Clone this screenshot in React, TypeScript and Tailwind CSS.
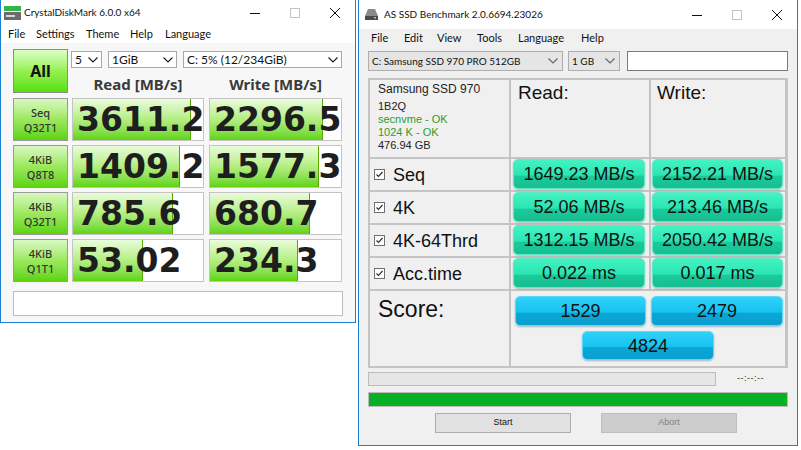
import React from 'react';

const cdmRows = [
  { a: 'Seq', b: 'Q32T1', r: '3611.2', w: '2296.5', rp: 91, wp: 86 },
  { a: '4KiB', b: 'Q8T8', r: '1409.2', w: '1577.3', rp: 82, wp: 83 },
  { a: '4KiB', b: 'Q32T1', r: '785.6', w: '680.7', rp: 77, wp: 76 },
  { a: '4KiB', b: 'Q1T1', r: '53.02', w: '234.3', rp: 54, wp: 67 },
];

const asRows = [
  { name: 'Seq', r: '1649.23 MB/s', w: '2152.21 MB/s' },
  { name: '4K', r: '52.06 MB/s', w: '213.46 MB/s' },
  { name: '4K-64Thrd', r: '1312.15 MB/s', w: '2050.42 MB/s' },
  { name: 'Acc.time', r: '0.022 ms', w: '0.017 ms' },
];

const Caption: React.FC = () => (
  <div className="ml-auto flex h-full">
    <div className="w-[40px] flex items-center justify-center">
      <svg width="10" height="10" viewBox="0 0 10 10">
        <path d="M0 5.5h10" stroke="#111" strokeWidth="1" />
      </svg>
    </div>
    <div className="w-[40px] flex items-center justify-center">
      <svg width="10" height="10" viewBox="0 0 10 10">
        <rect x="0.5" y="0.5" width="9" height="9" fill="none" stroke="#c4c4c4" strokeWidth="1" />
      </svg>
    </div>
    <div className="w-[40px] flex items-center justify-center">
      <svg width="10" height="10" viewBox="0 0 10 10">
        <path d="M0 0L10 10M10 0L0 10" stroke="#111" strokeWidth="1" />
      </svg>
    </div>
  </div>
);

const Chevron: React.FC<{ color?: string }> = ({ color = '#333' }) => (
  <svg width="10" height="6" viewBox="0 0 10 6">
    <path d="M0.5 0.5L5 5L9.5 0.5" fill="none" stroke={color} strokeWidth="1.2" />
  </svg>
);

const CdmSelect: React.FC<{ text: string; w: string }> = ({ text, w }) => (
  <div className={`${w} h-[17px] flex items-center justify-between border border-[#a8a8a8] bg-white pl-[3px] pr-[3px] font-['Lato',sans-serif] text-[12px] text-[#111]`}>
    <span className="leading-none">{text}</span>
    <Chevron color="#222" />
  </div>
);

const CdmValue: React.FC<{ v: string; p: number; w: string }> = ({ v, p, w }) => (
  <div className={`${w} relative h-full border border-[#c4c4c4] bg-white overflow-hidden`}>
    <div
      className="absolute left-0 top-0 bottom-0 border-r border-[#5aa800] bg-linear-to-b from-[#eafcdc] via-[#b4ee80] to-[#60d400]"
      style={{ width: `${p}%` }}
    />
    <div className="relative h-full flex items-center pl-[4px] font-['DejaVu_Sans',sans-serif] font-bold text-[33px] leading-none text-[#1e1e1e] whitespace-nowrap">
      {v}
    </div>
  </div>
);

const CrystalDiskMark: React.FC = () => (
  <div className="w-[356px] h-[323px] flex flex-col border border-t-0 border-[#1a80d4] bg-white font-['Noto_Sans',sans-serif]">
    <div className="h-[25px] flex items-center">
      <svg className="ml-[3px]" width="17" height="14" viewBox="0 0 17 14">
        <rect x="0" y="0" width="17" height="5" fill="#36b24a" />
        <rect x="0" y="6" width="17" height="8" fill="#6b6b6b" />
        <rect x="2" y="9" width="9" height="2" fill="#d8d8d8" />
      </svg>
      <span className="ml-[3px] font-['Lato',sans-serif] text-[10px] text-[#111]">CrystalDiskMark 6.0.0 x64</span>
      <Caption />
    </div>
    <div className="h-[18px] flex items-center pl-[7px] font-['Lato',sans-serif] text-[11px] text-[#111]">
      <span className="w-[28px]">File</span>
      <span className="w-[50px]">Settings</span>
      <span className="w-[44px]">Theme</span>
      <span className="w-[35px]">Help</span>
      <span>Language</span>
    </div>
    <div className="flex-1 bg-[#f7f7f7] pl-[12px] pt-[6px] flex flex-col">
      <div className="flex">
        <div className="w-[55px] h-[44px] flex items-center justify-center border border-[#8c8c8c] bg-linear-to-b from-[#dcffc4] via-[#96f04e] to-[#55e000] text-[16px] font-bold text-[#111]">
          All
        </div>
        <div className="ml-[3px] flex flex-col">
          <div className="flex gap-[6px] mt-[2px]">
            <CdmSelect text="5" w="w-[31px]" />
            <CdmSelect text="1GiB" w="w-[69px]" />
            <CdmSelect text="C: 5% (12/234GiB)" w="w-[159px]" />
          </div>
          <div className="flex mt-[6px] text-[15px] font-bold text-[#3a3a3a] leading-[20px]">
            <span className="ml-[1px] w-[132px] text-center">Read [MB/s]</span>
            <span className="ml-[5px] w-[133px] text-center">Write [MB/s]</span>
          </div>
        </div>
      </div>
      <div className="flex flex-col gap-[4px] mt-[4px]">
        {cdmRows.map((r, i) => (
          <div key={i} className="flex h-[43px]">
            <div className="w-[55px] flex flex-col items-center justify-center border border-[#9a9a9a] bg-linear-to-b from-[#d8f8c0] via-[#9ce85c] to-[#5cd400] text-[11px] leading-[15px] font-medium text-[#333]">
              <span>{r.a}</span>
              <span>{r.b}</span>
            </div>
            <div className="ml-[4px]">
              <CdmValue v={r.r} p={r.rp} w="w-[132px]" />
            </div>
            <div className="ml-[5px]">
              <CdmValue v={r.w} p={r.wp} w="w-[133px]" />
            </div>
          </div>
        ))}
      </div>
      <div className="mt-[9px] w-[330px] h-[25px] border border-[#bdbdbd] bg-white" />
    </div>
  </div>
);

const Check: React.FC = () => (
  <svg width="11" height="11" viewBox="0 0 11 11">
    <rect x="0.5" y="0.5" width="10" height="10" fill="#fff" stroke="#707070" />
    <path d="M2.5 5.5L4.5 7.5L8.5 3" fill="none" stroke="#333" strokeWidth="1.2" />
  </svg>
);

const Teal: React.FC<{ v: string }> = ({ v }) => (
  <div className="h-full flex items-center justify-center rounded-[5px] border border-[#5ee8c4] bg-[linear-gradient(#44f2c2,#2ae5b3_55%,#1bcb9b_56%,#16be90)] text-[18px] text-[#111] leading-none shadow-[0_1px_2px_rgba(0,120,90,0.35)]">
    {v}
  </div>
);

const Blue: React.FC<{ v: string; w: string; h: string }> = ({ v, w, h }) => (
  <div className={`${w} ${h} flex items-center justify-center rounded-[5px] border border-[#5fd8f8] bg-[linear-gradient(#30d2f8,#17c2ef_55%,#0aa7d7_56%,#0b9fcf)] text-[18px] text-[#111] leading-none shadow-[0_1px_2px_rgba(0,90,130,0.35)]`}>
    {v}
  </div>
);

const AsSsd: React.FC = () => (
  <div className="w-[440px] h-[446px] flex flex-col border border-t-0 border-[#1a80d4] bg-[#f0f0f0]">
    <div className="h-[29px] flex items-center bg-white font-['Lato',sans-serif]">
      <svg className="ml-[6px]" width="13" height="11" viewBox="0 0 13 11">
        <path d="M3 0H10L13 7H0Z" fill="#8a8a8a" />
        <rect x="0" y="7" width="13" height="4" fill="#4a4a4a" />
        <rect x="9" y="8" width="2" height="1.5" fill="#bbb" />
      </svg>
      <span className="ml-[6px] text-[10px] text-[#111]">AS SSD Benchmark 2.0.6694.23026</span>
      <Caption />
    </div>
    <div className="h-[19px] flex items-center pl-[12px] text-[11px] text-[#111] font-['Lato',sans-serif]">
      <span className="w-[33px]">File</span>
      <span className="w-[33px]">Edit</span>
      <span className="w-[40px]">View</span>
      <span className="w-[41px]">Tools</span>
      <span className="w-[63px]">Language</span>
      <span>Help</span>
    </div>
    <div className="flex-1 px-[9px] pt-[3px] flex flex-col font-['Liberation_Sans',sans-serif]">
      <div className="flex h-[20px]">
        <div className="w-[195px] flex items-center justify-between border border-[#adadad] bg-[#e5e5e5] pl-[3px] pr-[4px] font-['Lato',sans-serif] text-[10px] text-[#111]">
          <span>C: Samsung SSD 970 PRO 512GB</span>
          <Chevron color="#666" />
        </div>
        <div className="ml-[5px] w-[52px] flex items-center justify-between border border-[#adadad] bg-[#e5e5e5] pl-[3px] pr-[4px] font-['Lato',sans-serif] text-[10px] text-[#111]">
          <span>1 GB</span>
          <Chevron color="#666" />
        </div>
        <div className="ml-[7px] flex-1 border border-[#7a7a7a] bg-white" />
      </div>

      <div className="mt-[7px] grid grid-cols-[139px_138px_134px] grid-rows-[77px_31px_31px_31px_31px_75px] gap-[2px] border-2 border-[#c4c4c4] bg-[#c4c4c4]">
        <div className="bg-[#f0f0f0] pl-[8px] pt-[2px] text-[#222]">
          <div className="text-[12px] leading-[14px]">Samsung SSD 970</div>
          <div className="mt-[4px] text-[11px] leading-[13px]">1B2Q</div>
          <div className="text-[11px] leading-[13px] text-[#2f9a2f]">secnvme - OK</div>
          <div className="text-[11px] leading-[13px] text-[#2f9a2f]">1024 K - OK</div>
          <div className="text-[11px] leading-[13px]">476.94 GB</div>
        </div>
        <div className="bg-[#f0f0f0] pl-[7px] pt-[2px] text-[19px] leading-[22px] text-[#111]">Read:</div>
        <div className="bg-[#f0f0f0] pl-[6px] pt-[2px] text-[19px] leading-[22px] text-[#111]">Write:</div>

        {asRows.map((r) => (
          <React.Fragment key={r.name}>
            <div className="bg-[#f0f0f0] flex items-center pl-[4px] gap-[8px] text-[18px] text-[#111]">
              <Check />
              <span className="leading-none">{r.name}</span>
            </div>
            <div className="bg-[#f0f0f0] pl-[2px] pr-[4px] pb-[1px]">
              <Teal v={r.r} />
            </div>
            <div className="bg-[#f0f0f0] pl-[1px] pr-[2px] pb-[1px]">
              <Teal v={r.w} />
            </div>
          </React.Fragment>
        ))}

        <div className="bg-[#f0f0f0] pl-[8px] pt-[5px] text-[23px] leading-[26px] text-[#111]">Score:</div>
        <div className="col-span-2 bg-[#f0f0f0] flex flex-col items-center pt-[5px]">
          <div className="flex gap-[5px] pl-[2px]">
            <Blue v="1529" w="w-[131px]" h="h-[30px]" />
            <Blue v="2479" w="w-[132px]" h="h-[30px]" />
          </div>
          <div className="mt-[5px]">
            <Blue v="4824" w="w-[132px]" h="h-[29px]" />
          </div>
        </div>
      </div>

      <div className="mt-[4px] flex items-center h-[14px]">
        <div className="w-[348px] h-full border border-[#bcbcbc] bg-[#e6e6e6]" />
        <span className="ml-[21px] text-[9px] text-[#333] tracking-[0.5px]">--:--:--</span>
      </div>
      <div className="mt-[6px] h-[15px] border border-[#bcbcbc] bg-[#e6e6e6]">
        <div className="h-full w-full bg-[#06b025]" />
      </div>
      <div className="mt-[6px] flex pl-[67px] gap-[30px]">
        <div className="w-[136px] h-[20px] flex items-center justify-center border border-[#adadad] bg-[#e1e1e1] text-[9px] text-[#111]">
          Start
        </div>
        <div className="w-[136px] h-[20px] flex items-center justify-center border border-[#bfbfbf] bg-[#cccccc] text-[9px] text-[#838383]">
          Abort
        </div>
      </div>
    </div>
  </div>
);

export default function App() {
  return (
    <div className="w-[801px] h-[450px] bg-white flex items-start gap-[2px] overflow-hidden">
      <CrystalDiskMark />
      <AsSsd />
    </div>
  );
}
